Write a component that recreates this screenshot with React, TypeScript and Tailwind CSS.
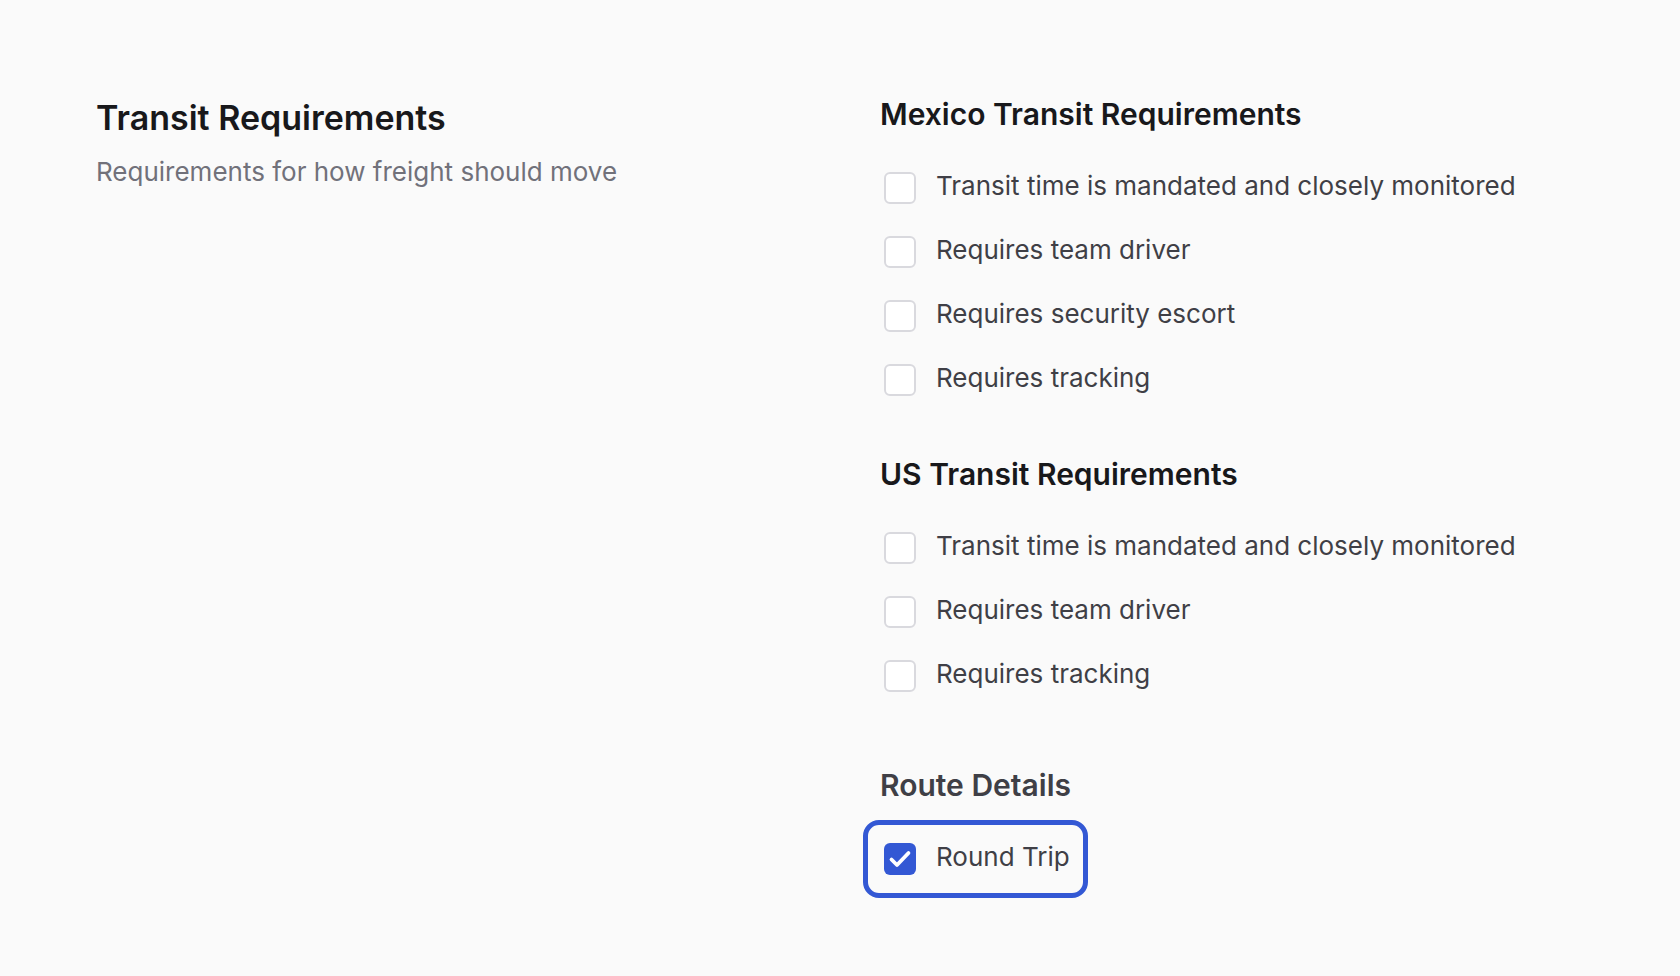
import React, { useState } from 'react'

type Item = { id: string; label: string }

const mexico: Item[] = [
  { id: 'mx-time', label: 'Transit time is mandated and closely monitored' },
  { id: 'mx-team', label: 'Requires team driver' },
  { id: 'mx-escort', label: 'Requires security escort' },
  { id: 'mx-track', label: 'Requires tracking' },
]

const us: Item[] = [
  { id: 'us-time', label: 'Transit time is mandated and closely monitored' },
  { id: 'us-team', label: 'Requires team driver' },
  { id: 'us-track', label: 'Requires tracking' },
]

function Box({ checked }: { checked: boolean }) {
  if (checked) {
    return (
      <span className="flex h-[32px] w-[32px] shrink-0 translate-y-[2px] items-center justify-center rounded-[6px] bg-[#3358d4]">
        <svg width="32" height="32" viewBox="0 0 32 32" fill="none">
          <path d="M7.5 16.5l5.5 5.5L24.5 10" stroke="white" strokeWidth="3.8" strokeLinecap="round" strokeLinejoin="round" />
        </svg>
      </span>
    )
  }
  return <span className="h-[32px] w-[32px] shrink-0 translate-y-[2px] rounded-[6px] border-2 border-[#d9d9de] bg-white" />
}

function Row({ label, checked, focused, onToggle }: { label: string; checked: boolean; focused?: boolean; onToggle: () => void }) {
  return (
    <label className="relative ml-[4px] flex h-[32px] w-fit cursor-pointer items-center gap-[20px]" onClick={onToggle}>
      {focused && <span className="pointer-events-none absolute -top-[21px] -bottom-[25px] -left-[21px] -right-[18px] rounded-[16px] border-[5px] border-[#3358d4]" />}
      <Box checked={checked} />
      <span className="text-[26px] leading-[32px] text-[#3f3f46]">{label}</span>
    </label>
  )
}

export default function App() {
  const [checked, setChecked] = useState<Record<string, boolean>>({ round: true })
  const toggle = (id: string) => setChecked(c => ({ ...c, [id]: !c[id] }))

  return (
    <div className="min-h-[976px] bg-[#fafafa] font-['Inter','Liberation_Sans',sans-serif]">
      <div className="grid grid-cols-2 gap-x-[80px] px-[96px] pt-[96px]">
        <div className="mt-[4px]">
          <h2 className="text-[34px] font-semibold leading-[36px] text-[#18181b]">Transit Requirements</h2>
          <p className="mt-[20px] text-[26px] leading-[32px] text-[#71717a]">Requirements for how freight should move</p>
        </div>

        <div>
          <h3 className="text-[30px] font-semibold leading-[36px] text-[#18181b]">Mexico Transit Requirements</h3>
          <div className="mt-[38px] flex flex-col gap-[32px]">
            {mexico.map(i => (
              <Row key={i.id} label={i.label} checked={!!checked[i.id]} onToggle={() => toggle(i.id)} />
            ))}
          </div>

          <h3 className="mt-[62px] text-[30px] font-semibold leading-[36px] text-[#18181b]">US Transit Requirements</h3>
          <div className="mt-[38px] flex flex-col gap-[32px]">
            {us.map(i => (
              <Row key={i.id} label={i.label} checked={!!checked[i.id]} onToggle={() => toggle(i.id)} />
            ))}
          </div>

          <h3 className="mt-[77px] text-[30px] font-semibold leading-[36px] text-[#3f3f46]">Route Details</h3>
          <div className="mt-[38px] flex flex-col">
            <Row label="Round Trip" checked={!!checked.round} focused onToggle={() => toggle('round')} />
          </div>
        </div>
      </div>
    </div>
  )
}
